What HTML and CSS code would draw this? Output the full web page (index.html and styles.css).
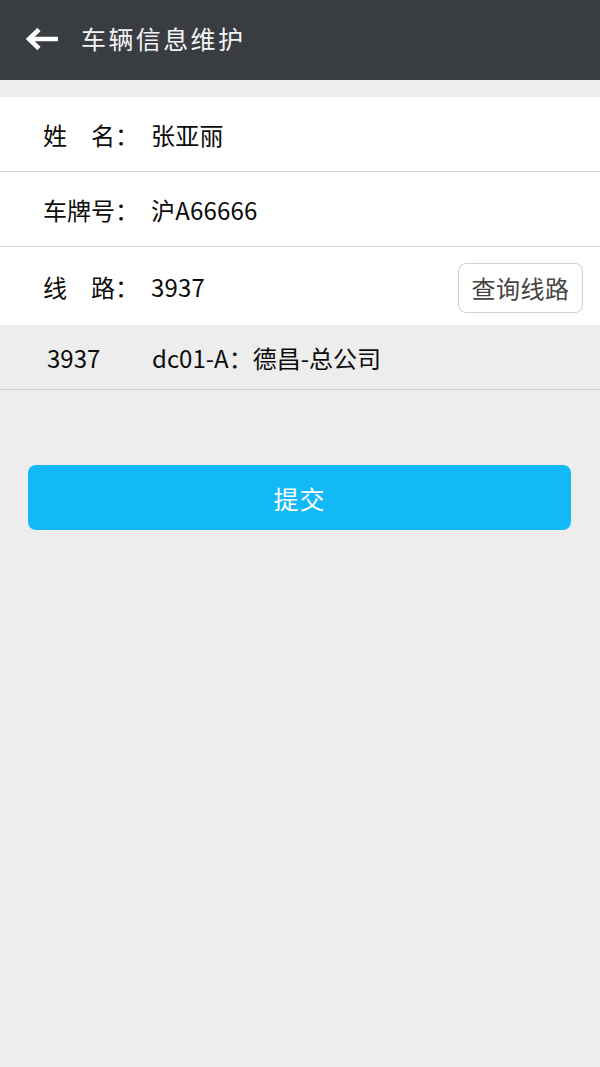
FILE: index.html
```html
<!DOCTYPE html>
<html lang="zh-CN">
<head>
<meta charset="utf-8">
<title>车辆信息维护</title>
<link rel="stylesheet" href="styles.css">
</head>
<body>
<header class="topbar">
  <svg class="back" width="35" height="26" viewBox="0 0 35 26" aria-hidden="true">
    <path d="M34 13H6M15 3.5L5 13L15 22.5" fill="none" stroke="#fff" stroke-width="4.5" stroke-linecap="butt" stroke-linejoin="miter"/>
  </svg>
  <h1 class="title">车辆信息维护</h1>
</header>
<main class="content">
  <section class="form">
    <div class="row">
      <span class="label">姓　名：</span>
      <span class="value">张亚丽</span>
    </div>
    <div class="row">
      <span class="label">车牌号：</span>
      <span class="value">沪A66666</span>
    </div>
    <div class="row row-route">
      <span class="label">线　路：</span>
      <span class="value">3937</span>
      <button class="query" type="button">查询线路</button>
    </div>
  </section>
  <div class="result">
    <span class="code">3937</span>
    <span class="desc">dc01-A：德昌-总公司</span>
  </div>
  <div class="actions">
    <button class="submit" type="button">提交</button>
  </div>
</main>
</body>
</html>
```
FILE: styles.css
```css
html, body {
  margin: 0;
  padding: 0;
}
body {
  width: 600px;
  min-height: 1067px;
  background: #ededed;
  font-family: "Noto Sans CJK SC", "Noto Sans", sans-serif;
  color: #0c0c0c;
}
.topbar {
  height: 80px;
  background: #393d42;
  display: flex;
  align-items: center;
  padding-left: 24px;
  box-sizing: border-box;
}
.back {
  display: block;
  margin-top: -2px;
}
.title {
  margin: -4px 0 0 22px;
  font-size: 25px;
  font-weight: normal;
  color: #f4f4f4;
  letter-spacing: 2.4px;
  line-height: 1;
}
.content {
  padding-top: 17px;
}
.form {
  background: #fff;
}
.row {
  display: flex;
  align-items: center;
  height: 75px;
  padding-left: 43px;
  padding-right: 17px;
  border-bottom: 1px solid #d6d6d6;
  box-sizing: border-box;
  font-size: 24px;
}
.row-route {
  height: 78px;
  border-bottom: none;
}
.label {
  width: 108px;
  flex: none;
  white-space: pre;
}
.value {
  flex: 1;
  font-size: 24px;
  letter-spacing: 0.2px;
}
.query {
  height: 50px;
  width: 125px;
  border: 1px solid #cfcfcf;
  border-radius: 8px;
  background: #fff;
  font-family: inherit;
  font-size: 24px;
  color: #444;
  padding: 0;
  margin-top: 3px;
  letter-spacing: 0.5px;
}
.result {
  display: flex;
  align-items: center;
  height: 65px;
  padding-left: 47px;
  border-bottom: 1px solid #cfcfcf;
  box-sizing: border-box;
  font-size: 24px;
  background: #ededed;
}
.code {
  width: 105px;
  flex: none;
}
.actions {
  padding: 75px 29px 0 28px;
}
.submit {
  display: block;
  width: 100%;
  height: 65px;
  border: none;
  border-radius: 8px;
  background: #13b9f7;
  color: #fff;
  font-family: inherit;
  font-size: 25px;
  letter-spacing: 1px;
  padding: 0;
}
```
